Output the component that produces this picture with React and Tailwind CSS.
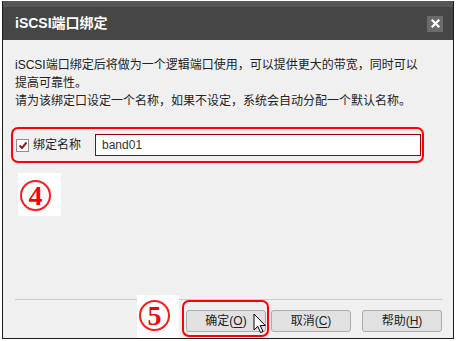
import React from "react";

const font = { fontFamily: '"Liberation Sans","Noto Sans CJK SC",sans-serif' };

function Btn({ label, k }) {
  return (
    <button className="w-[80px] h-[22px] rounded-[3px] border border-[#acacac] bg-[#e1e1e1] text-[12px] leading-[20px] text-[#222] flex items-center justify-center">
      {label}(<span className="underline underline-offset-2">{k}</span>)
    </button>
  );
}

function Circled({ n }) {
  return (
    <div
      className="w-[31px] h-[31px] rounded-full border-[2.5px] border-[#ff1a1a] flex items-center justify-center text-[#ff0000] text-[28px] font-bold leading-none"
      style={{ fontFamily: '"Liberation Serif",serif' }}
    >
      {n}
    </div>
  );
}

export default function App() {
  return (
    <div className="relative w-[457px] h-[341px] bg-white overflow-hidden" style={font}>
      <div className="ml-[2px] mt-[1px] w-[452px] h-[338px] border-x border-b border-[#1e1e1e] flex flex-col bg-[#f0f0f0]">
        <div className="h-[39px] shrink-0 bg-[#464646] border-t-[6px] border-[#575757] flex items-center justify-between pl-[12px] pr-[10px]">
          <span className="text-white font-bold text-[14px]">iSCSI端口绑定</span>
          <div className="w-[16px] h-[16px] bg-[#6b6b6b] flex items-center justify-center">
            <svg width="9" height="9" viewBox="0 0 9 9">
              <path d="M1.5 1.5 L7.5 7.5 M7.5 1.5 L1.5 7.5" stroke="white" strokeWidth="2.2" strokeLinecap="square" />
            </svg>
          </div>
        </div>
        <div className="flex-1 flex flex-col">
          <div className="pt-[16px] pl-[12px] text-[12px] leading-[18px] text-[#222] whitespace-nowrap">
            iSCSI端口绑定后将做为一个逻辑端口使用，可以提供更大的带宽，同时可以
            <br />
            提高可靠性。
            <br />
            请为该绑定口设定一个名称，如果不设定，系统会自动分配一个默认名称。
          </div>
          <div className="mt-[17px] ml-[8px] w-[413px] h-[36px] border-2 border-[#ff0000] rounded-[7px] flex items-center pl-[3px] pr-[1px]">
            <div className="w-[13px] h-[13px] border border-[#8e8e8e] bg-white flex items-center justify-center">
              <svg width="10" height="9" viewBox="0 0 10 9">
                <path d="M1.5 4.5 L4 7 L8.5 1.5" stroke="#a01818" strokeWidth="2" fill="none" />
              </svg>
            </div>
            <span className="ml-[4px] text-[12px] text-[#222]">绑定名称</span>
            <div className="ml-[14px] w-[326px] h-[22px] border-[1.5px] border-[#9a0000] bg-white flex items-center pl-[6px] text-[12px] text-[#333]">
              band01
            </div>
          </div>
          <div className="mt-[10px] ml-[15px] w-[43px] h-[43px] bg-white pl-[2px] pt-[7px]">
            <Circled n="4" />
          </div>
          <div className="flex-1" />
          <div className="mx-[12px] mr-[11px] border-t border-[#c9c9c9]" />
          <div className="pt-[10px] pb-[6px] pr-[11px] flex justify-end">
            <Btn label="确定" k="O" />
            <div className="ml-[5px]"><Btn label="取消" k="C" /></div>
            <div className="ml-[11px]"><Btn label="帮助" k="H" /></div>
          </div>
        </div>
      </div>

      <div className="absolute left-[137px] top-[295px] w-[42px] h-[43px] bg-white pl-[2px] pt-[5px]">
        <Circled n="5" />
      </div>
      <div className="absolute left-[182px] top-[300px] w-[87px] h-[37px] border-2 border-[#ff0000] rounded-[7px]" />
      <svg className="absolute left-[253px] top-[313px]" width="14" height="21" viewBox="0 0 14 21">
        <path d="M1 1 L1 17 L4.8 13.4 L7.6 19.6 L10 18.6 L7.3 12.5 L12.3 12.5 Z" fill="white" stroke="black" strokeWidth="1" strokeLinejoin="miter" />
      </svg>
    </div>
  );
}
